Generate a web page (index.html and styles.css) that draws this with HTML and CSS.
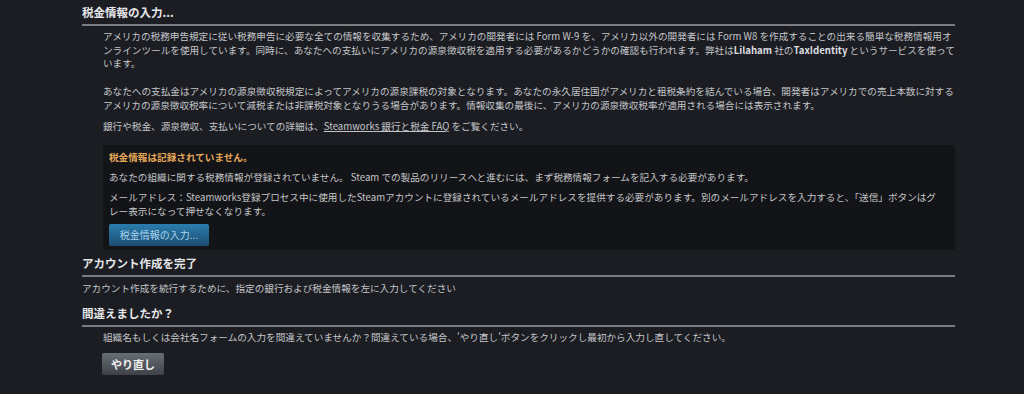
FILE: index.html
```html
<!DOCTYPE html>
<html lang="ja">
    <head>
        <meta charset="UTF-8" />
        <meta name="viewport" content="width=device-width, initial-scale=1.0" />
        <title>税金情報の入力</title>
        <link rel="stylesheet" href="styles.css">
    </head>
    <body>
        <div class="page">
            <div class="section">
                <h2 class="section-title">税金情報の入力...</h2>
                <div class="section-body">
                    <p class="intro">アメリカの税務申告規定に従い税務申告に必要な全ての情報を収集するため、アメリカの開発者には Form W-9 を、アメリカ以外の開発者には Form W8 を作成することの出来る簡単な税務情報用オンラインツールを使用しています。同時に、あなたへの支払いにアメリカの源泉徴収税を適用する必要があるかどうかの確認も行われます。弊社は<b>Lilaham</b> 社の<b>TaxIdentity</b> というサービスを使っています。</p>
                    <p>あなたへの支払金はアメリカの源泉徴収税規定によってアメリカの源泉課税の対象となります。あなたの永久居住国がアメリカと租税条約を結んでいる場合、開発者はアメリカでの売上本数に対するアメリカの源泉徴収税率について減税または非課税対象となりうる場合があります。情報収集の最後に、アメリカの源泉徴収税率が適用される場合には表示されます。</p>
                    <p>銀行や税金、源泉徴収、支払いについての詳細は、<a href="#">Steamworks 銀行と税金 FAQ</a> をご覧ください。</p>

                    <div class="notice">
                        <p class="warning">税金情報は記録されていません。</p>
                        <p>あなたの組織に関する税務情報が登録されていません。 Steam での製品のリリースへと進むには、まず税務情報フォームを記入する必要があります。</p>
                        <p>メールアドレス：Steamworks登録プロセス中に使用したSteamアカウントに登録されているメールアドレスを提供する必要があります。別のメールアドレスを入力すると、「送信」ボタンはグレー表示になって押せなくなります。</p>
                        <button class="btn btn-blue">税金情報の入力...</button>
                    </div>
                </div>
            </div>

            <div class="section">
                <h2 class="section-title">アカウント作成を完了</h2>
                <p class="flat">アカウント作成を続行するために、指定の銀行および税金情報を左に入力してください</p>
            </div>

            <div class="section">
                <h2 class="section-title">間違えましたか？</h2>
                <div class="section-body">
                    <p>組織名もしくは会社名フォームの入力を間違えていませんか？間違えている場合、'やり直し'ボタンをクリックし最初から入力し直してください。</p>
                    <button class="btn btn-grey">やり直し</button>
                </div>
            </div>
        </div>
    </body>
</html>
```

FILE: styles.css
```css
body {
    margin: 0;
    padding: 0;
    background-color: #1b1d23;
    color: #c4c6c9;
    font-family: "Noto Sans CJK JP", "Noto Sans", sans-serif;
    font-size: 9.62px;
}
.page {
    width: 873px;
    padding: 5px 0 0 82px;
}
.section-title {
    margin: 0;
    padding-bottom: 4px;
    font-size: 11.5px;
    line-height: 15px;
    font-weight: bold;
    color: #e6e7e9;
    border-bottom: 2px solid #7b7d82;
}
.section-body {
    padding: 4px 0 0 21px;
}
p {
    margin: 0 0 8px 0;
    line-height: 13.5px;
}
.intro {
    margin-bottom: 14.5px;
}
.flat {
    margin: 5px 0 11px 0;
}
b {
    color: #dcdde0;
}
a {
    color: #c4c6c9;
    text-decoration: underline;
}
.notice {
    background-color: #131417;
    border-radius: 3px;
    padding: 5px 14px 4px 6px;
    margin: 11px 0 6px 0;
}
.notice p {
    margin-bottom: 6px;
    line-height: 14px;
}
.warning {
    color: #e4a85a;
    font-weight: bold;
}
.btn {
    display: block;
    font-family: "Noto Sans CJK JP", "Noto Sans", sans-serif;
    font-size: 10px;
    border: none;
    border-radius: 2px;
    padding: 0;
    height: 22px;
    white-space: nowrap;
    cursor: pointer;
}
.btn-blue {
    width: 100px;
    background: linear-gradient(to bottom, #2a7bab 5%, #1d4f73 95%);
    color: #a9d3ee;
}
.btn-grey {
    margin: 6px 0 0 -1px;
    width: 62px;
    font-size: 11px;
    background: linear-gradient(to bottom, #666c73 5%, #40444a 95%);
    color: #f0f0f0;
    font-weight: bold;
}
```
